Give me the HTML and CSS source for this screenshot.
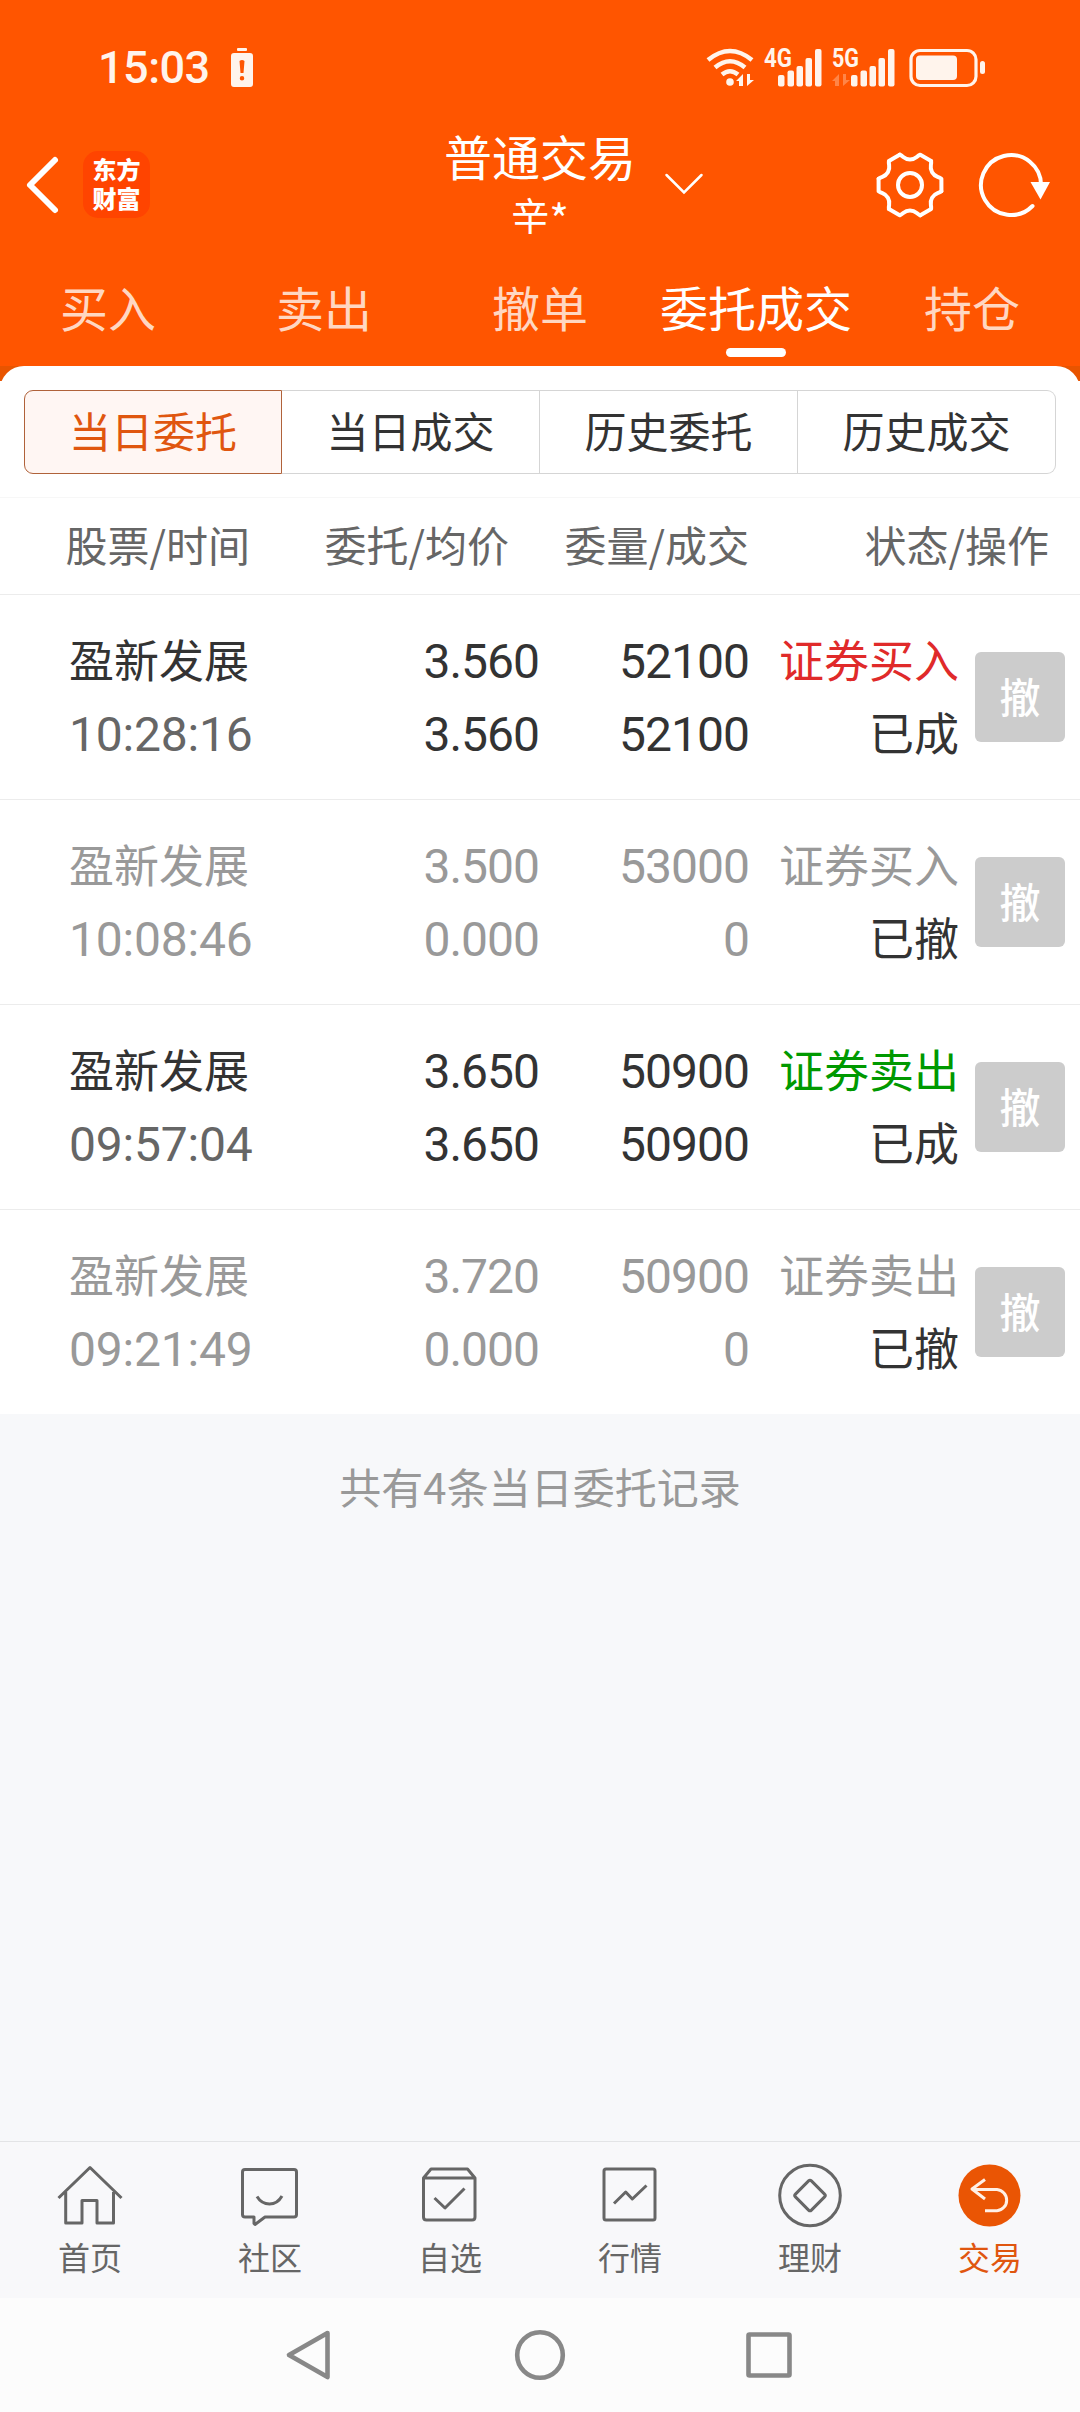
FILE: index.html
```html
<!DOCTYPE html>
<html lang="zh-CN">
<head>
    <meta charset="UTF-8">
    <meta name="viewport" content="width=device-width, initial-scale=1.0">
    <title>普通交易</title>
    <link rel="stylesheet" href="styles.css">
</head>
<body>

    <header class="header">
        <div class="status-bar">
            <span class="clock">15:03</span>
            <svg class="battery-alert" width="22" height="40" viewBox="0 0 22 40" fill="#fff4ec">
                <rect x="6" y="0" width="10" height="3" rx="1"/>
                <path fill-rule="evenodd" d="M3 5H19Q22 5 22 8V36Q22 39 19 39H3Q0 39 0 36V8Q0 5 3 5ZM8.500 13L9.500 25H12.500L13.500 13Q11 11 8.500 13ZM11 28A2 2 0 1 0 11 32.500A2 2 0 1 0 11 28Z"/>
            </svg>
            <svg class="status-icons" width="280" height="40" viewBox="706 48 280 40" fill="#fff4ec">
                <g fill="none" stroke="#fff4ec" stroke-width="4.500">
                    <path d="M708 60Q730 42 752 60"/>
                    <path d="M715 67.500Q730 55 745 67.500"/>
                    <path d="M722 74.500Q730 68 738 74.500"/>
                </g>
                <circle cx="730" cy="82" r="3.800"/>
                <path id="data" d="M743 74V86H739V81H736ZM747 74V86L754 80H750V74Z"/>
                <text class="net" x="764" y="67" textLength="28" lengthAdjust="spacingAndGlyphs">4G</text>
                <g id="bars">
                    <rect x="778" y="75" width="6.500" height="11.500" rx="2"/>
                    <rect x="787.500" y="70.500" width="6.500" height="16" rx="2"/>
                    <rect x="796.500" y="66" width="6.500" height="20.500" rx="2"/>
                    <rect x="805.500" y="58" width="6.500" height="28.500" rx="2"/>
                    <rect x="815" y="49" width="6.500" height="37.500" rx="2"/>
                </g>
                <text class="net" x="832" y="67" textLength="27" lengthAdjust="spacingAndGlyphs">5G</text>
                <use href="#data" x="96" opacity="0.3"/>
                <use href="#bars" x="73"/>
                <rect x="911" y="50.500" width="65" height="35" rx="9" fill="none" stroke="#fff4ec" stroke-width="3.200"/>
                <rect x="916" y="55.500" width="41" height="24.500" rx="4"/>
                <rect x="980" y="61" width="5" height="13" rx="2.500"/>
            </svg>
        </div>

        <div class="nav-bar">
            <div class="nav-left">
                <svg width="36" height="60" viewBox="0 0 36 60" fill="none" stroke="#fff" stroke-width="6" stroke-linecap="round" stroke-linejoin="round">
                    <path d="M31 5L6 30L31 55"/>
                </svg>
                <div class="logo">东方<br>财富</div>
            </div>
            <div class="nav-title">
                <h1>普通交易</h1>
                <p>辛<span class="mask">*</span></p>
            </div>
            <div class="nav-right">
                <svg class="chevron" width="38" height="22" viewBox="0 0 38 22" fill="none" stroke="#fff" stroke-width="2.500" stroke-linecap="round">
                    <path d="M1.500 1L19 18.500L36.500 1"/>
                </svg>
                <svg class="gear" width="68" height="68" viewBox="-34 -34 68 68" fill="none" stroke="#fff" stroke-width="4" stroke-linecap="round" stroke-linejoin="round">
                    <circle r="12"/>
                    <path id="tooth" d="M-10.300 -30.300C-6 -28.500 -6 -25.500 0 -25.500S6 -28.500 10.300 -30.300L21.100 -24.100"/>
                    <use href="#tooth" transform="rotate(60)"/>
                    <use href="#tooth" transform="rotate(120)"/>
                    <use href="#tooth" transform="rotate(180)"/>
                    <use href="#tooth" transform="rotate(240)"/>
                    <use href="#tooth" transform="rotate(300)"/>
                </svg>
                <svg class="refresh" width="76" height="68" viewBox="-35 -34 76 68" fill="none" stroke="#fff" stroke-width="4">
                    <path d="M30 1A30 30 0 1 0 21.500 21" stroke-linecap="round"/>
                    <path d="M19.500 -3H39L29.500 14.500Z" fill="#fff" stroke="none"/>
                </svg>
            </div>
        </div>

        <nav class="tabs">
            <a class="tab">买入</a>
            <a class="tab">卖出</a>
            <a class="tab">撤单</a>
            <a class="tab active">委托成交</a>
            <a class="tab">持仓</a>
        </nav>
    </header>

    <main class="main">
        <div class="panel-wrapper">
            <div class="panel">
                <div class="segments">
                    <button class="segment active">当日委托</button>
                    <button class="segment">当日成交</button>
                    <button class="segment">历史委托</button>
                    <button class="segment">历史成交</button>
                </div>

                <div class="list-head">
                    <span>股票/时间</span>
                    <span>委托/均价</span>
                    <span>委量/成交</span>
                    <span>状态/操作</span>
                </div>

                <div class="order">
                    <div class="cell stock"><span>盈新发展</span><span class="time">10:28:16</span></div>
                    <div class="cell num"><span>3.560</span><span>3.560</span></div>
                    <div class="cell num"><span>52100</span><span>52100</span></div>
                    <div class="cell"><span class="buy">证券买入</span><span class="state">已成</span></div>
                    <button class="cancel">撤</button>
                </div>

                <div class="order cancelled">
                    <div class="cell stock"><span>盈新发展</span><span class="time">10:08:46</span></div>
                    <div class="cell num"><span>3.500</span><span>0.000</span></div>
                    <div class="cell num"><span>53000</span><span>0</span></div>
                    <div class="cell"><span>证券买入</span><span class="state">已撤</span></div>
                    <button class="cancel">撤</button>
                </div>

                <div class="order">
                    <div class="cell stock"><span>盈新发展</span><span class="time">09:57:04</span></div>
                    <div class="cell num"><span>3.650</span><span>3.650</span></div>
                    <div class="cell num"><span>50900</span><span>50900</span></div>
                    <div class="cell"><span class="sell">证券卖出</span><span class="state">已成</span></div>
                    <button class="cancel">撤</button>
                </div>

                <div class="order cancelled">
                    <div class="cell stock"><span>盈新发展</span><span class="time">09:21:49</span></div>
                    <div class="cell num"><span>3.720</span><span>0.000</span></div>
                    <div class="cell num"><span>50900</span><span>0</span></div>
                    <div class="cell"><span>证券卖出</span><span class="state">已撤</span></div>
                    <button class="cancel">撤</button>
                </div>
            </div>
        </div>

        <p class="summary">共有4条当日委托记录</p>
    </main>

    <nav class="tab-bar">
        <a class="tab-item">
            <svg width="72" height="72" viewBox="0 0 72 72">
                <path d="M4.500 38L36 7.500L67.500 38M11.700 32V63H28V40.500H43V63H59.500V32"/>
            </svg>
            <span>首页</span>
        </a>
        <a class="tab-item">
            <svg width="72" height="72" viewBox="0 0 72 72">
                <path d="M11 9.500H60Q62.500 9.500 62.500 12V54.500Q62.500 57 60 57H31L21 64.500L20 63.500V57H11Q8.500 57 8.500 54.500V12Q8.500 9.500 11 9.500Z"/>
                <path d="M23 36.500Q27.500 44 35.500 44Q43.500 44 48 36"/>
            </svg>
            <span>社区</span>
        </a>
        <a class="tab-item">
            <svg width="72" height="72" viewBox="0 0 72 72">
                <path d="M9.500 18L17 9H53.500L61 18V57Q61 60 58 60H12.500Q9.500 60 9.500 57ZM9.500 18H61"/>
                <path d="M20.500 38L31 48L50.500 28.500"/>
            </svg>
            <span>自选</span>
        </a>
        <a class="tab-item">
            <svg width="72" height="72" viewBox="0 0 72 72">
                <rect x="10" y="9" width="51" height="51" rx="2"/>
                <path d="M20 43.500L31.700 32L38.300 39L52.500 25.500"/>
            </svg>
            <span>行情</span>
        </a>
        <a class="tab-item">
            <svg width="72" height="72" viewBox="0 0 72 72">
                <circle cx="36" cy="35.500" r="30.300"/>
                <rect x="24.700" y="24.200" width="22.600" height="22.600" rx="2" transform="rotate(45 36 35.500)"/>
            </svg>
            <span>理财</span>
        </a>
        <a class="tab-item active">
            <svg width="72" height="72" viewBox="0 0 72 72">
                <circle class="disc" cx="35.500" cy="35.500" r="31"/>
                <path d="M31 19.500L18 29L31 39M18 29.500H43A10.700 10.700 0 0 1 43 50.800H31"/>
            </svg>
            <span>交易</span>
        </a>
    </nav>

    <footer class="system-nav">
        <svg width="50" height="50" viewBox="0 0 50 50">
            <path d="M41.500 3L3 25L41.500 47Z"/>
        </svg>
        <svg width="50" height="50" viewBox="0 0 50 50">
            <circle cx="25" cy="25" r="22.800"/>
        </svg>
        <svg width="50" height="50" viewBox="0 0 50 50">
            <rect x="4.500" y="4.500" width="41" height="41" rx="1"/>
        </svg>
    </footer>

</body>
</html>
```
FILE: styles.css
```css
* {
    box-sizing: border-box;
}
body {
    margin: 0;
    width: 1080px;
    height: 2412px;
    display: flex;
    flex-direction: column;
    background-color: #f7f8fa;
    color: #333;
    font-family: "Noto Sans CJK SC", sans-serif;
}
h1, p {
    margin: 0;
    font-weight: 400;
}
svg {
    display: block;
    flex: none;
    overflow: visible;
}
button {
    margin: 0;
    padding: 0;
    font-family: inherit;
}

/* Header */
.header {
    height: 366px;
    background-color: #ff5500;
    color: #fff;
}
.status-bar {
    display: flex;
    align-items: center;
    height: 133px;
    padding: 3px 94px 0 98px;
}
.clock {
    width: 133px;
    font: 500 45px/46px Roboto, sans-serif;
    letter-spacing: -0.5px;
    color: #fff4ec;
}
.status-icons {
    margin-left: auto;
}
.net {
    font: 700 25px Roboto, sans-serif;
}
.nav-bar {
    display: grid;
    grid-template-columns: 420px 192px 1fr;
    height: 112px;
    padding: 0 28px 0 24px;
}
.nav-left, .nav-right {
    display: flex;
    align-items: center;
    height: 103px;
}
.logo {
    width: 67px;
    height: 67px;
    margin-left: 23px;
    padding-top: 3px;
    border-radius: 15px;
    background-color: #ff4400;
    font-size: 24px;
    font-weight: 900;
    line-height: 29px;
    text-align: center;
}
.nav-title {
    text-align: center;
}
.nav-title h1 {
    font-size: 48px;
    line-height: 44px;
}
.nav-title p {
    margin-top: 18px;
    font-size: 38px;
    line-height: 38px;
}
.mask {
    font-size: 42px;
    line-height: 0;
    vertical-align: -6px;
}
.chevron {
    margin-left: 29px;
}
.gear {
    margin-left: auto;
}
.refresh {
    margin-left: 32px;
}
.tabs {
    display: grid;
    grid-template-columns: repeat(5, 1fr);
    height: 121px;
}
.tab {
    display: flex;
    flex-direction: column;
    align-items: center;
    padding-top: 31px;
    font-size: 48px;
    line-height: 60px;
    color: #ffd7c2;
}
.tab.active {
    color: #fff;
}
.tab.active::after {
    content: "";
    width: 60px;
    height: 9px;
    margin-top: 12px;
    border-radius: 5px;
    background-color: #fff;
}

/* Order list */
.main {
    flex: 1;
}
.panel-wrapper {
    background: linear-gradient(#e85400 15px, #fff 15px);
}
.panel {
    padding-top: 24px;
    border-radius: 24px 24px 0 0;
    background-color: #fff;
}
.segments {
    display: flex;
    margin: 0 24px;
    padding-bottom: 23px;
}
.segment {
    width: 258px;
    height: 84px;
    padding-bottom: 4px;
    border: 1px solid #d5d5d5;
    border-left-width: 0;
    background-color: #fff;
    color: #333;
    font-size: 42px;
    line-height: 78px;
}
.segment.active {
    border: 1px solid #b0623a;
    border-radius: 9px 0 0 9px;
    background-color: #fff6f3;
    color: #e0560f;
}
.segment:last-child {
    border-radius: 0 9px 9px 0;
}
.list-head {
    display: grid;
    grid-template-columns: 250px 259px 240px 300px;
    height: 98px;
    border-top: 1px solid #f7f7f7;
    border-bottom: 1px solid #ececec;
    color: #666;
    font-size: 42px;
    line-height: 92px;
    text-align: right;
}
.order {
    display: grid;
    grid-template-columns: 300px 239px 210px 210px 90px;
    align-items: start;
    height: 205px;
    padding-top: 27px;
    border-bottom: 1px solid #ececec;
    font-size: 45px;
    line-height: 73px;
}
.order:last-child {
    height: 204px;
    border-bottom: none;
}
.cell {
    display: flex;
    flex-direction: column;
    align-items: flex-end;
    white-space: nowrap;
}
.stock {
    align-items: flex-start;
    padding-left: 69px;
}
.num, .time {
    padding-top: 3px;
    font-family: Roboto, sans-serif;
    font-size: 48px;
}
.num {
    letter-spacing: -1px;
}
.time {
    letter-spacing: -0.2px;
    color: #666;
}
.cancelled {
    color: #999;
}
.cancelled .time {
    color: #999;
}
.state {
    color: #333;
}
.buy {
    color: #e02a2a;
}
.sell {
    color: #009900;
}
.cancel {
    width: 90px;
    height: 90px;
    margin: 30px 0 0 16px;
    padding-bottom: 4px;
    border: none;
    border-radius: 6px;
    background-color: #ccc;
    color: #fff;
    font-size: 41px;
    font-weight: 500;
    line-height: 86px;
}
.summary {
    padding-top: 41px;
    color: #999;
    font-size: 42px;
    line-height: 62px;
    text-align: center;
}

/* Bottom bars */
.tab-bar {
    display: grid;
    grid-template-columns: repeat(6, 1fr);
    height: 157px;
    padding-top: 18px;
    border-top: 1px solid #e3e4e6;
    background-color: #f8f8fa;
}
.tab-item {
    display: flex;
    flex-direction: column;
    align-items: center;
    color: #666;
    font-size: 32px;
    line-height: 48px;
}
.tab-item svg {
    fill: none;
    stroke: #666;
    stroke-width: 3;
    stroke-linejoin: round;
}
.tab-item.active {
    color: #e0560f;
}
.tab-item.active svg {
    stroke: #fff0e6;
}
.tab-item .disc {
    fill: #ea5504;
    stroke: none;
}
.system-nav {
    display: flex;
    justify-content: center;
    align-items: center;
    gap: 179px;
    height: 114px;
    background-color: #fcfcfc;
}
.system-nav svg {
    fill: none;
    stroke: #888;
    stroke-width: 4.6;
    stroke-linejoin: round;
}
```
